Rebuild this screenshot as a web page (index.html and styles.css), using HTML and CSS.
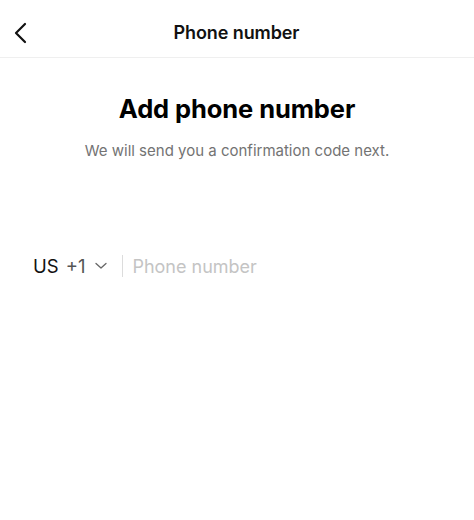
FILE: index.html
```html
<!DOCTYPE html>
<html>
<head>
<meta charset="utf-8">
<link rel="stylesheet" href="styles.css">
</head>
<body>
<div class="screen">
  <header class="topbar">
    <button class="back" aria-label="Back">
      <svg width="14" height="22" viewBox="0 0 14 22"><path d="M12 2 L3 11 L12 20" fill="none" stroke="#111" stroke-width="2.2" stroke-linecap="round" stroke-linejoin="round"/></svg>
    </button>
    <h1 class="title">Phone number</h1>
    <span class="spacer"></span>
  </header>
  <main class="content">
    <h2 class="heading">Add phone number</h2>
    <p class="sub">We will send you a confirmation code next.</p>
    <div class="phone-row">
      <div class="country">
        <span class="cc">US</span>
        <span class="code">+1</span>
        <svg class="caret" width="12" height="8" viewBox="0 0 12 8"><path d="M1 1.5 L6 6 L11 1.5" fill="none" stroke="#666" stroke-width="1.3" stroke-linecap="round" stroke-linejoin="round"/></svg>
      </div>
      <span class="divider"></span>
      <input class="phone" type="tel" placeholder="Phone number">
    </div>
  </main>
</div>
</body>
</html>
```
FILE: styles.css
```css
* { box-sizing: border-box; }
html, body { margin: 0; padding: 0; background: #fff; }
body { font-family: Inter, "Liberation Sans", sans-serif; color: #000; }
.screen { width: 474px; height: 520px; }
.topbar {
  height: 58px;
  display: flex;
  align-items: center;
  justify-content: space-between;
  padding: 8px 14px 0 13px;
  border-bottom: 1px solid #efefef;
}
.back { background: none; border: 0; padding: 0; width: 30px; height: 30px; display: flex; align-items: center; cursor: pointer; }
.spacer { width: 30px; }
.title { margin: 0; font-size: 18px; font-weight: 600; color: #111; letter-spacing: -0.1px; }
.content { display: flex; flex-direction: column; align-items: center; }
.heading { margin: 35px 0 0; font-size: 25.5px; font-weight: 700; letter-spacing: -0.1px; }
.sub { margin: 17px 0 0; font-size: 15px; color: #737373; }
.phone-row { align-self: stretch; display: flex; align-items: center; padding: 0 33px; margin-top: 94px; height: 24px; }
.country { display: flex; align-items: center; font-size: 18px; }
.cc { color: #111; font-size: 18.5px; }
.code { color: #555; margin-left: 7px; font-size: 18.5px; }
.caret { margin-left: 10px; }
.divider { width: 1px; height: 22px; background: #dcdcdc; margin-left: 15px; }
.phone { border: 0; outline: none; font: inherit; font-size: 18px; margin-left: 9px; padding: 0; color: #111; background: transparent; width: 250px; }
.phone::placeholder { color: #c4c4c4; }
```
